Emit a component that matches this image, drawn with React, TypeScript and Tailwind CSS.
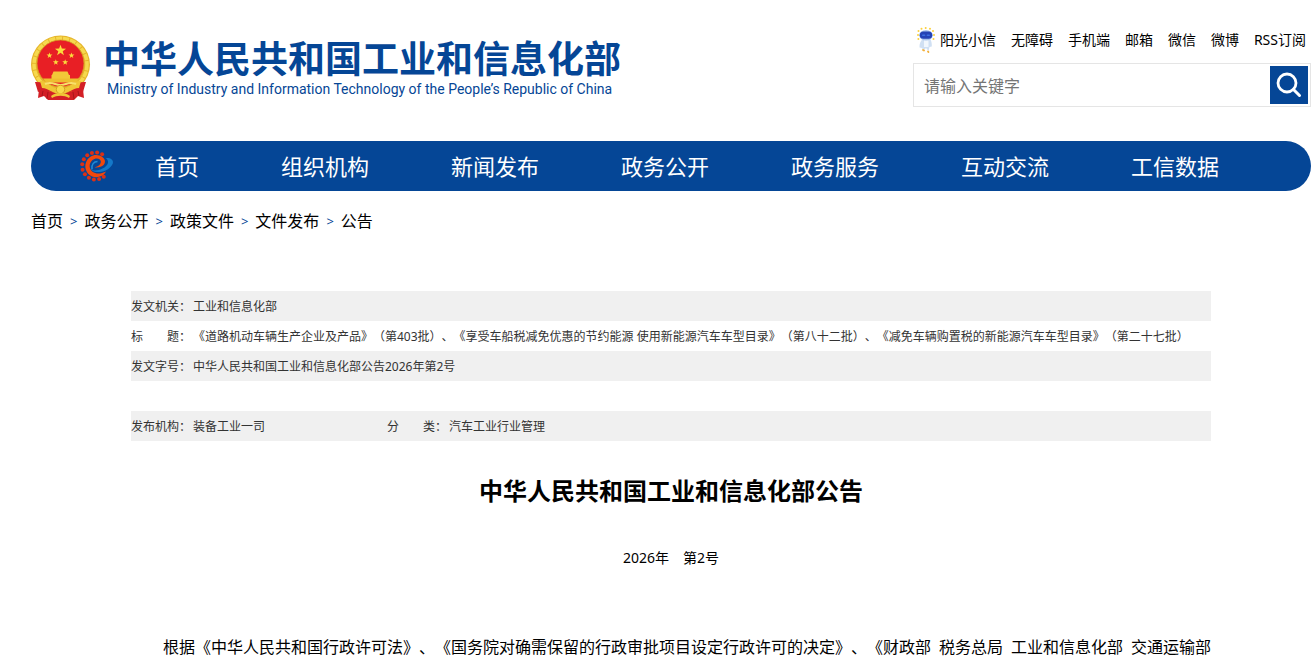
import React from "react";

const star = (cx: number, cy: number, r: number) =>
  Array.from({ length: 10 }, (_, i) => {
    const a = (Math.PI / 5) * i - Math.PI / 2;
    const d = i % 2 ? r * 0.4 : r;
    return `${(cx + d * Math.cos(a)).toFixed(2)},${(cy + d * Math.sin(a)).toFixed(2)}`;
  }).join(" ");

function Emblem() {
  return (
    <svg viewBox="0 0 60 66" className="h-[66px] w-[60px] shrink-0" role="img" aria-label="国徽">
      <path d="M9 46 L7 63 L13 61 L17 65 H43 L47 61 L53 63 L51 46Z" fill="#d31f26" />
      <ellipse cx="29.500" cy="29.500" rx="29.500" ry="29" fill="#e6b52c" />
      <ellipse cx="29.500" cy="29.500" rx="26.500" ry="26.200" fill="none" stroke="#f6d94e" strokeWidth="3.500" strokeDasharray="6 1" />
      <circle cx="29.500" cy="28.500" r="23.500" fill="#e81f25" stroke="#d59a23" strokeWidth="0.800" />
      <polygon points={star(29.5, 15.5, 5.8)} fill="#fbdc3c" />
      <polygon points={star(18.5, 20.5, 3.1)} fill="#fbdc3c" />
      <polygon points={star(40.5, 20.5, 3.1)} fill="#fbdc3c" />
      <polygon points={star(24.8, 27.3, 3.1)} fill="#fbdc3c" />
      <polygon points={star(34.2, 27.3, 3.1)} fill="#fbdc3c" />
      <path d="M22.500 36.500h14l1.500 3.500h-17zM20.500 40h18.500v4h-18.500z" fill="#f2c838" />
      <path d="M12 43.500h36l-3 4H15z" fill="#edbf30" />
      <path d="M4 47 C15 46 20 55 29.500 55 C39 55 44 46 55 47 L52 57 C42 53 38 59 29.500 59 C21 59 17 53 7 57Z" fill="#d31f26" />
      <path d="M9 46 C16 45 20 54 29.500 54 C39 54 43 45 50 46 L48 53 C41 53 38 59 29.500 59 C21 59 18 53 11 53Z" fill="#f0c636" />
      <path d="M14 49 C21 46 24 50 29.500 50 C35 50 38 46 45 49" fill="none" stroke="#f8e169" strokeWidth="2" />
      <circle cx="29.500" cy="54.500" r="4.200" fill="#f7da4a" stroke="#d8a025" strokeWidth="1" />
      <path d="M20 61 C24 57 35 57 39 61 L38 63 C33 60 26 60 21 63Z" fill="#f0c636" />
      <path d="M12 56l-1 5M47 56l1 5M17 57l-1 7M42 57l1 7" stroke="#a8151c" strokeWidth="1" />
    </svg>
  );
}

const teeth = Array.from({ length: 12 }, (_, i) => {
  const a = ((52 + i * 22.5) * Math.PI) / 180;
  return { x: 15.5 + 13.4 * Math.cos(a), y: 16 + 13.6 * Math.sin(a) };
});

function GearMark() {
  return (
    <svg viewBox="0 0 34 32" className="h-8 w-[34px]" aria-hidden="true">
      {teeth.map((t, i) => (
        <circle key={i} cx={t.x} cy={t.y} r="2" fill="#dc3015" />
      ))}
      <path
        d="M26 21.500 C23.500 26.500 17 28.400 12 26.400 C6.400 24 3.800 17.500 6.200 12 C8.800 6 14.500 4 19.500 5.600 C24.500 7.200 26.500 11.500 23.800 14.800 C21.500 17 17.500 18 14.500 17.200 C18 16.800 21 14.500 20.800 11.500 C20.500 8 15.500 7.500 12.500 10 C8.500 13.500 9 19 12.500 21.700 C16 24.300 21 24 26 21.500Z"
        fill="#f2480c"
      />
      <path
        d="M11.500 19.800 C17 21.600 24 19 27 15 C29 12.300 28 9.500 25.500 8 C30 7.500 34 9.500 32.800 13.500 C30.800 18.500 25 21.500 19.500 22 C16 22.400 12.500 21.800 11.500 19.800Z"
        fill="#1478c8"
      />
      <path d="M12 19.500 C11 14.500 14 11.500 17.500 11.500" fill="none" stroke="#1f8ad6" strokeWidth="1.600" />
    </svg>
  );
}

function Robot() {
  return (
    <svg viewBox="0 0 18 26" className="h-[26px] w-[18px]" aria-hidden="true">
      <g fill="#fbd03c">
        <circle cx="4.500" cy="1.800" r="1" />
        <circle cx="8.700" cy="1" r="1" />
        <circle cx="13" cy="1.800" r="1" />
        <circle cx="1.500" cy="4" r="1" />
        <circle cx="16" cy="4" r="1" />
        <circle cx="1" cy="8" r="1" />
        <circle cx="17" cy="8" r="1" />
        <circle cx="1.400" cy="12" r="1" />
        <circle cx="16.500" cy="12" r="1" />
      </g>
      <path d="M5.500 12 Q2 16 2.500 20.500 L5 21 L6.500 23.500 L9 21 L11.500 24 L12.500 20 L14.800 19.500 Q15 14 13 12Z" fill="#d0e0f3" />
      <path d="M7 13h4.500v7H7z" fill="#f1f7fd" />
      <ellipse cx="9" cy="8.300" rx="6.800" ry="5.200" fill="#a9c3ea" />
      <rect x="2.800" y="4.600" width="12.400" height="7.200" rx="3.600" fill="#2443b5" />
      <path d="M5.800 8.200h1.800M10.400 8.200h1.800" stroke="#3d6fe0" strokeWidth="1.600" strokeLinecap="round" />
      <path d="M6 23l1 .6M11 24.500l.4.600" stroke="#f3b03a" strokeWidth="1.800" strokeLinecap="round" />
    </svg>
  );
}

const topLinks = ["无障碍", "手机端", "邮箱", "微信", "微博", "RSS订阅"];
const navItems = ["组织机构", "新闻发布", "政务公开", "政务服务", "互动交流", "工信数据"];
const crumbs = ["首页", "政务公开", "政策文件", "文件发布", "公告"];

export default function App() {
  return (
    <div
      lang="zh-CN"
      className="bg-white pl-[31px] pr-[5px] font-['Noto_Sans','Noto_Sans_CJK_SC',sans-serif] text-black [text-spacing-trim:space-all]"
    >
      <header>
        <div className="flex h-[141px] items-start justify-between">
          <a href="#" className="flex items-start gap-3 pt-[35px] text-[#054696]">
            <Emblem />
            <span className="flex flex-col whitespace-nowrap">
              <span className="text-[37px] leading-[48px] font-bold">中华人民共和国工业和信息化部</span>
              <span className="pl-1 font-[Roboto,sans-serif] text-[14px] leading-3">
                Ministry of Industry and Information Technology of the People’s Republic of China
              </span>
            </span>
          </a>
          <div className="flex w-[398px] flex-col pt-[27px]">
            <nav aria-label="快捷链接" className="flex h-[26px] items-center justify-end gap-[15px] pr-[5px] text-sm whitespace-nowrap">
              <a href="#" className="flex items-center gap-[5px]">
                <Robot />
                阳光小信
              </a>
              {topLinks.map((t) => (
                <a key={t} href="#">
                  {t}
                </a>
              ))}
            </nav>
            <form className="mt-[10px] flex h-11 items-center border border-[#e5e5e5] pr-[2px]" onSubmit={(e) => e.preventDefault()}>
              <input
                type="text"
                aria-label="请输入关键字"
                placeholder="请输入关键字"
                className="h-full min-w-0 flex-1 px-[10px] pt-[2px] text-base outline-none placeholder:text-[#757575]"
              />
              <button type="submit" aria-label="搜索" className="flex size-[38px] items-center justify-center bg-[#054696]">
                <svg viewBox="0 0 26 26" className="size-[26px]" fill="none" stroke="#fff" aria-hidden="true">
                  <circle cx="11" cy="11" r="9" strokeWidth="2.800" />
                  <path d="M17.500 17.500 L23.500 23.500" strokeWidth="3" strokeLinecap="round" />
                </svg>
              </button>
            </form>
          </div>
        </div>
        <nav aria-label="主导航" className="flex h-[50px] items-center rounded-full bg-[#054696] pr-[51px] pl-[49px] text-[22px] text-white">
          <GearMark />
          <a href="#" className="w-[126px] text-center">
            首页
          </a>
          {navItems.map((t) => (
            <a key={t} href="#" className="flex-1 text-center whitespace-nowrap">
              {t}
            </a>
          ))}
        </nav>
      </header>

      <nav aria-label="面包屑" className="flex h-[60px] items-center gap-[7px] text-base">
        {crumbs.map((c, i) => (
          <React.Fragment key={c}>
            {i > 0 && <span className="pt-[2px] text-[13px] text-[#054696]">&gt;</span>}
            <a href="#">{c}</a>
          </React.Fragment>
        ))}
      </nav>

      <main className="mx-[100px] mt-10">
        <table className="w-full table-fixed border-collapse text-left text-xs text-[#333]">
          <colgroup>
            <col className="w-[62px]" />
            <col className="w-[194px]" />
            <col className="w-[62px]" />
            <col />
          </colgroup>
          <tbody className="whitespace-nowrap [&_td]:p-0 [&_td]:pt-[2px] [&_th]:p-0 [&_th]:pt-[2px] [&_th]:font-normal">
            <tr className="h-[30px] bg-[#f0f0f0]">
              <th scope="row">发文机关：</th>
              <td colSpan={3}>工业和信息化部</td>
            </tr>
            <tr className="h-[30px]">
              <th scope="row">标　　题：</th>
              <td colSpan={3}>
                《道路机动车辆生产企业及产品》（第403批）、《享受车船税减免优惠的节约能源 使用新能源汽车车型目录》（第八十二批）、《减免车辆购置税的新能源汽车车型目录》（第二十七批）
              </td>
            </tr>
            <tr className="h-[30px] bg-[#f0f0f0]">
              <th scope="row">发文字号：</th>
              <td colSpan={3}>中华人民共和国工业和信息化部公告2026年第2号</td>
            </tr>
            <tr className="h-[30px]">
              <td colSpan={4} />
            </tr>
            <tr className="h-[30px] bg-[#f0f0f0]">
              <th scope="row">发布机构：</th>
              <td>装备工业一司</td>
              <th scope="row">分　　类：</th>
              <td>汽车工业行业管理</td>
            </tr>
          </tbody>
        </table>

        <article>
          <h1 className="mt-8 text-center text-2xl leading-9 font-bold">中华人民共和国工业和信息化部公告</h1>
          <p className="mt-[39px] text-center text-sm leading-5">2026年　第2号</p>
          <p className="mt-16 indent-8 text-base leading-[30px] whitespace-nowrap">
            根据《中华人民共和国行政许可法》、《国务院对确需保留的行政审批项目设定行政许可的决定》、《财政部&#8194;税务总局&#8194;工业和信息化部&#8194;交通运输部
          </p>
        </article>
      </main>
    </div>
  );
}
